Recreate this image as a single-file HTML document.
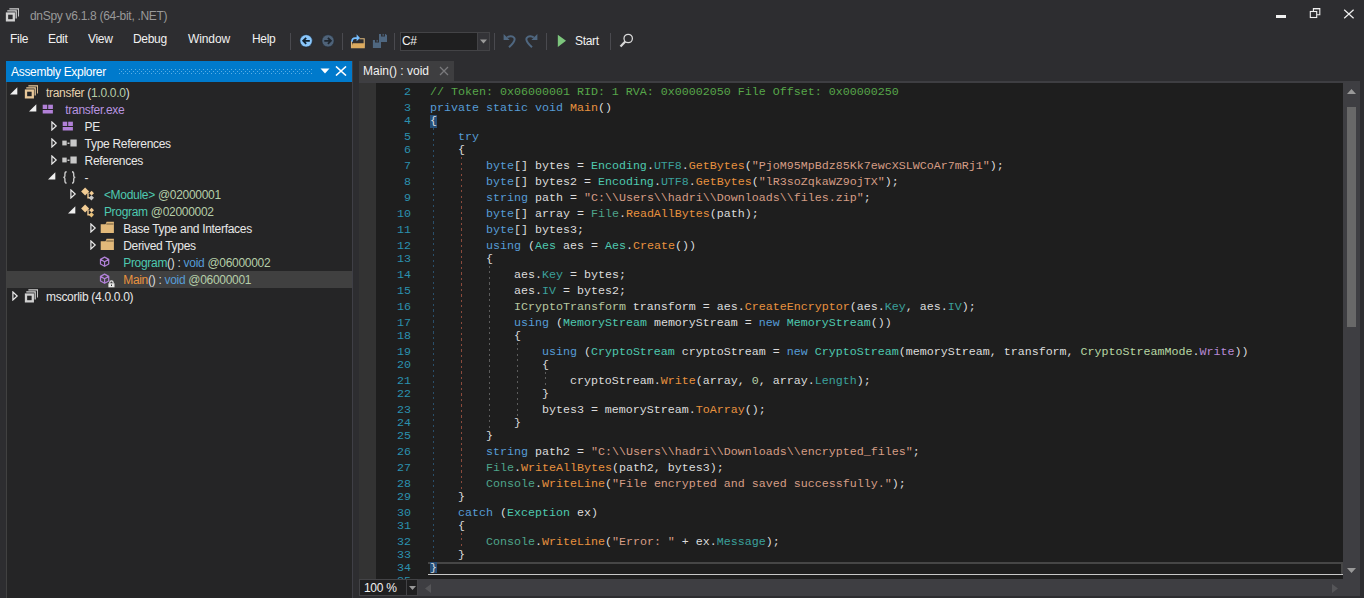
<!DOCTYPE html>
<html><head><meta charset="utf-8"><style>
*{margin:0;padding:0;box-sizing:border-box}
html,body{width:1364px;height:598px;overflow:hidden;background:#2d2d30;font-family:"Liberation Sans",sans-serif;font-size:12px;color:#f1f1f1}
.abs{position:absolute}
.ui{position:absolute;white-space:pre;letter-spacing:-0.3px;line-height:16px}
.sep{position:absolute;top:33px;width:1px;height:17px;background:#4a4a4f}
.row{position:absolute;left:7px;width:345px;height:17px}
.row.sel{background:#404040}
.row .ab{position:absolute}
.ico{position:absolute;top:0.5px;width:16px;height:16px}
.ico svg{display:block}
.tt{position:absolute;top:1px;white-space:pre;letter-spacing:-0.3px;line-height:17px;font-size:12px}
.ln{position:absolute;right:0;width:60px;text-align:right;font-family:"Liberation Mono",monospace;font-size:11.67px;letter-spacing:0px;color:#2b91af;line-height:16px;white-space:pre}
.cl{position:absolute;left:430px;font-family:"Liberation Mono",monospace;font-size:11.67px;letter-spacing:0px;line-height:16px;white-space:pre;color:#dcdcdc}
.gd{position:absolute;width:1px}
.selbg{position:absolute;left:430px;width:7px;background:#264f78}
.selb{color:#dcdcdc}
</style></head><body>
<!-- title bar -->
<div class="abs" style="left:3px;top:7.5px;width:16px;height:16px"><svg width="16" height="16" viewBox="0 0 16 16"><rect x="4" y="5.55" width="6.8" height="6.8" fill="none" stroke="#d0d0d0" stroke-width="2.3"/><path d="M4.9 3.5 V2.85 H13.2 V10.4" fill="none" stroke="#d0d0d0" stroke-width="1.25"/><path d="M7 1.4 V0.8 H15.7 V8.4" fill="none" stroke="#d0d0d0" stroke-width="1.25"/></svg></div>
<div class="ui" style="left:30px;top:8px;color:#999999">dnSpy v6.1.8 (64-bit, .NET)</div>
<div class="abs" style="left:1276px;top:15px;width:10px;height:3px;background:#f0f0f0"></div>
<svg class="abs" style="left:1309px;top:7px" width="13" height="13" viewBox="0 0 13 13"><rect x="1.3" y="4.5" width="6.4" height="6" fill="none" stroke="#f0f0f0" stroke-width="1.1"/><path d="M4.4 4.3 V1.5 H10.8 V7.8 H7.9" fill="none" stroke="#f0f0f0" stroke-width="1.1"/><path d="M4.4 1.9 H10.8" stroke="#f0f0f0" stroke-width="1"/></svg>
<svg class="abs" style="left:1343px;top:9px" width="12" height="10" viewBox="0 0 12 10"><path d="M1.2 0.8 L10.6 9.2 M10.6 0.8 L1.2 9.2" stroke="#f0f0f0" stroke-width="1.2"/></svg>
<!-- menu -->
<div class="ui" style="left:10px;top:31px">File</div>
<div class="ui" style="left:48px;top:31px">Edit</div>
<div class="ui" style="left:88px;top:31px">View</div>
<div class="ui" style="left:133px;top:31px">Debug</div>
<div class="ui" style="left:188px;top:31px;letter-spacing:-0.1px">Window</div>
<div class="ui" style="left:252px;top:31px">Help</div>
<!-- toolbar -->
<div class="sep" style="left:290px"></div>
<svg class="abs" style="left:299px;top:34px" width="14" height="14" viewBox="0 0 14 14"><circle cx="7.1" cy="6.85" r="6.2" fill="#8ac6fa" stroke="#16293a" stroke-width="0.6"/><path d="M10.8 6.85 H4.3 M7.2 3.9 L4.2 6.85 L7.2 9.8" fill="none" stroke="#10202e" stroke-width="1.8"/></svg>
<svg class="abs" style="left:321px;top:34px" width="14" height="14" viewBox="0 0 14 14"><circle cx="7" cy="6.85" r="6.1" fill="#4f6379" stroke="#222a33" stroke-width="0.6"/><path d="M3.3 6.85 H9.8 M6.9 3.9 L9.9 6.85 L6.9 9.8" fill="none" stroke="#1f262e" stroke-width="1.8"/></svg>
<div class="sep" style="left:342px"></div>
<svg class="abs" style="left:350px;top:33px" width="16" height="16" viewBox="0 0 16 16"><path d="M1.5 8 V14.7 H14.2 V5.8 H9.5" fill="none" stroke="#dcb67a" stroke-width="1.1"/><path d="M2.6 10.2 H14.8 L14.1 14.9 H1.3 Z" fill="#dcaa5e"/><path d="M2.2 8.8 C1.6 6.6 3 5.2 5.2 5.2 H7.6" fill="none" stroke="#75beff" stroke-width="1.7"/><path d="M6.6 1.3 L10 4.9 L6.6 8.3 Z" fill="#75beff"/></svg>
<svg class="abs" style="left:372px;top:33px" width="16" height="16" viewBox="0 0 16 16"><path d="M7 0.9 H13.6 L15 2.3 V9 H7 Z" fill="#4f6780"/><rect x="9" y="0.9" width="4" height="2.6" fill="#2d2d30"/><rect x="10.6" y="0.9" width="1.1" height="1.8" fill="#4f6780"/><path d="M0.9 6.9 H7.5 L9 8.3 V15 H0.9 Z" fill="#4f6780"/><rect x="3" y="6.9" width="4" height="2.6" fill="#2d2d30"/><rect x="4.6" y="6.9" width="1.1" height="1.8" fill="#4f6780"/></svg>
<div class="sep" style="left:394px"></div>
<div class="abs" style="left:400px;top:32px;width:90px;height:19px;border:1px solid #434346;background:#1f1f20"></div>
<div class="abs" style="left:477px;top:33px;width:12px;height:17px;background:#333337;border-left:1px solid #434346"></div>
<svg class="abs" style="left:480px;top:39px" width="7" height="5" viewBox="0 0 7 5"><path d="M0 0.5 H7 L3.5 4.5 Z" fill="#999"/></svg>
<div class="ui" style="left:402px;top:33px">C#</div>
<div class="sep" style="left:494px"></div>
<svg class="abs" style="left:502px;top:33px" width="15" height="16" viewBox="0 0 15 16"><path d="M5.2 4.6 C7 3 10.5 2.6 12.2 4.8 C13.6 6.8 12.8 9 7 14.3" fill="none" stroke="#4f6780" stroke-width="2"/><path d="M1.6 1 V6.9 H7.6 Z" fill="#4f6780"/></svg>
<svg class="abs" style="left:524px;top:33px" width="15" height="16" viewBox="0 0 15 16"><path d="M9.8 4.6 C8 3 4.5 2.6 2.8 4.8 C1.4 6.8 2.2 9 8 14.3" fill="none" stroke="#4f6780" stroke-width="2"/><path d="M13.4 1 V6.9 H7.4 Z" fill="#4f6780"/></svg>
<div class="sep" style="left:546px"></div>
<svg class="abs" style="left:557px;top:34px" width="10" height="14" viewBox="0 0 10 14"><path d="M0.8 0.8 L9 6.8 L0.8 13 Z" fill="#7dc67d"/></svg>
<div class="ui" style="left:575px;top:33px">Start</div>
<div class="sep" style="left:610px"></div>
<svg class="abs" style="left:619px;top:33px" width="15" height="15" viewBox="0 0 15 15"><circle cx="9.2" cy="5.5" r="4.2" fill="none" stroke="#d8d8d8" stroke-width="1.3"/><path d="M6.3 8.5 L1.5 13.5" stroke="#d8d8d8" stroke-width="2.2"/></svg>

<!-- assembly explorer -->
<div class="abs" style="left:6px;top:61px;width:347px;height:537px;background:#252526;border-left:1px solid #414141;border-right:1px solid #3f3f46"></div>
<div class="abs" style="left:6px;top:61px;width:346px;height:21px;background:#007acc"></div>
<div class="ui" style="left:11px;top:64px;color:#ffffff">Assembly Explorer</div>
<svg class="abs" style="left:119px;top:69px" width="194" height="5"><defs><pattern id="dp" width="4" height="4" patternUnits="userSpaceOnUse"><rect x="0" y="0" width="1" height="1" fill="#5aaee6"/><rect x="2" y="2" width="1" height="1" fill="#5aaee6"/></pattern></defs><rect width="194" height="5" fill="url(#dp)"/></svg>
<svg class="abs" style="left:320px;top:68px" width="10" height="6" viewBox="0 0 10 6"><path d="M0.5 0.5 H9.5 L5 5.5 Z" fill="#ffffff"/></svg>
<svg class="abs" style="left:335px;top:66px" width="12" height="10" viewBox="0 0 12 10"><path d="M1 0.5 L11 9.5 M11 0.5 L1 9.5" stroke="#ffffff" stroke-width="1.6"/></svg>
<div class="row" style="top:84px"><svg class="ab" style="left:2.7px;top:2.5px" width="8" height="8" viewBox="0 0 8 8"><path d="M0 7.5 L7.3 7.5 L7.3 0.2 Z" fill="#f0f0f0"/></svg><div class="ico" style="left:15.0px"><svg width="16" height="16" viewBox="0 0 16 16"><rect x="4" y="5.55" width="6.8" height="6.8" fill="none" stroke="#e8c89a" stroke-width="2.3"/><path d="M4.9 3.5 V2.85 H13.2 V10.4" fill="none" stroke="#e8c89a" stroke-width="1.25"/><path d="M7 1.4 V0.8 H15.7 V8.4" fill="none" stroke="#e8c89a" stroke-width="1.25"/></svg></div><div class="tt" style="left:39.0px"><span style="color:#e6d2ae">transfer</span><span style="color:#dcdcdc"> (</span><span style="color:#b5cea8">1.0.0.0</span><span style="color:#dcdcdc">)</span></div></div><div class="row" style="top:101px"><svg class="ab" style="left:22.0px;top:2.5px" width="8" height="8" viewBox="0 0 8 8"><path d="M0 7.5 L7.3 7.5 L7.3 0.2 Z" fill="#f0f0f0"/></svg><div class="ico" style="left:34.3px"><svg width="16" height="16" viewBox="0 0 16 16"><rect x="1.7" y="2.7" width="4.5" height="4.3" fill="#b180d7"/><rect x="7.2" y="2.7" width="4.7" height="4.3" fill="#b180d7"/><rect x="1.7" y="8" width="10.2" height="3.5" fill="#b180d7"/></svg></div><div class="tt" style="left:58.3px"><span style="color:#b894e0">transfer.exe</span></div></div><div class="row" style="top:118px"><svg class="ab" style="left:44.0px;top:3px" width="7" height="10" viewBox="0 0 7 10"><path d="M0.9 1 L5.2 5 L0.9 9 Z" fill="none" stroke="#e8e8e8" stroke-width="1.2"/></svg><div class="ico" style="left:53.6px"><svg width="16" height="16" viewBox="0 0 16 16"><rect x="1.7" y="2.7" width="4.5" height="4.3" fill="#b180d7"/><rect x="7.2" y="2.7" width="4.7" height="4.3" fill="#b180d7"/><rect x="1.7" y="8" width="10.2" height="3.5" fill="#b180d7"/></svg></div><div class="tt" style="left:77.6px"><span style="color:#e8e8e8">PE</span></div></div><div class="row" style="top:135px"><svg class="ab" style="left:44.0px;top:3px" width="7" height="10" viewBox="0 0 7 10"><path d="M0.9 1 L5.2 5 L0.9 9 Z" fill="none" stroke="#e8e8e8" stroke-width="1.2"/></svg><div class="ico" style="left:53.6px"><svg width="16" height="16" viewBox="0 0 16 16"><rect x="1.3" y="4.6" width="4.4" height="4.8" fill="#c8c8c8"/><rect x="6.5" y="6.5" width="2" height="1.5" fill="#c8c8c8"/><rect x="9.4" y="3.5" width="6.3" height="7" fill="#c8c8c8"/></svg></div><div class="tt" style="left:77.6px"><span style="color:#e8e8e8">Type References</span></div></div><div class="row" style="top:152px"><svg class="ab" style="left:44.0px;top:3px" width="7" height="10" viewBox="0 0 7 10"><path d="M0.9 1 L5.2 5 L0.9 9 Z" fill="none" stroke="#e8e8e8" stroke-width="1.2"/></svg><div class="ico" style="left:53.6px"><svg width="16" height="16" viewBox="0 0 16 16"><rect x="1.3" y="4.6" width="4.4" height="4.8" fill="#c8c8c8"/><rect x="6.5" y="6.5" width="2" height="1.5" fill="#c8c8c8"/><rect x="9.4" y="3.5" width="6.3" height="7" fill="#c8c8c8"/></svg></div><div class="tt" style="left:77.6px"><span style="color:#e8e8e8">References</span></div></div><div class="row" style="top:169px"><svg class="ab" style="left:41.3px;top:2.5px" width="8" height="8" viewBox="0 0 8 8"><path d="M0 7.5 L7.3 7.5 L7.3 0.2 Z" fill="#f0f0f0"/></svg><div class="ico" style="left:53.6px"><svg width="16" height="16" viewBox="0 0 16 16"><path d="M5.6 1.7 C4 1.7 3.9 2.6 3.9 4.2 V5.9 C3.9 6.9 3.3 7.35 2.3 7.35 C3.3 7.35 3.9 7.8 3.9 8.8 V10.7 C3.9 12.3 4 13.1 5.6 13.1 M11 1.7 C12.6 1.7 12.7 2.6 12.7 4.2 V5.9 C12.7 6.9 13.3 7.35 14.3 7.35 C13.3 7.35 12.7 7.8 12.7 8.8 V10.7 C12.7 12.3 12.6 13.1 11 13.1" fill="none" stroke="#c8c8c8" stroke-width="1.4"/></svg></div><div class="tt" style="left:77.6px"><span style="color:#e8e8e8">-</span></div></div><div class="row" style="top:186px"><svg class="ab" style="left:63.3px;top:3px" width="7" height="10" viewBox="0 0 7 10"><path d="M0.9 1 L5.2 5 L0.9 9 Z" fill="none" stroke="#e8e8e8" stroke-width="1.2"/></svg><div class="ico" style="left:72.9px"><svg width="16" height="16" viewBox="0 0 16 16"><path d="M5.1 0.4 L9.1 4.4 L5.1 8.4 L1.1 4.4Z" fill="#f2cc94"/><path d="M8 5.5 V10.8 H10" fill="none" stroke="#f2cc94" stroke-width="1.4"/><path d="M11.6 3.8 L14 6.2 L11.6 8.6 L9.2 6.2Z" fill="#f2cc94"/><path d="M11.4 8.2 L14 10.8 L11.4 13.4 L8.8 10.8Z" fill="#c8c8c8"/></svg></div><div class="tt" style="left:96.9px"><span style="color:#4ec9b0">&lt;Module&gt;</span><span style="color:#b5cea8"> @02000001</span></div></div><div class="row" style="top:203px"><svg class="ab" style="left:60.6px;top:2.5px" width="8" height="8" viewBox="0 0 8 8"><path d="M0 7.5 L7.3 7.5 L7.3 0.2 Z" fill="#f0f0f0"/></svg><div class="ico" style="left:72.9px"><svg width="16" height="16" viewBox="0 0 16 16"><path d="M5.1 0.4 L9.1 4.4 L5.1 8.4 L1.1 4.4Z" fill="#f2cc94"/><path d="M8 5.5 V10.8 H10" fill="none" stroke="#f2cc94" stroke-width="1.4"/><path d="M11.6 3.8 L14 6.2 L11.6 8.6 L9.2 6.2Z" fill="#f2cc94"/><path d="M11.4 8.2 L14 10.8 L11.4 13.4 L8.8 10.8Z" fill="#e8c17b"/></svg></div><div class="tt" style="left:96.9px"><span style="color:#4ec9b0">Program</span><span style="color:#b5cea8"> @02000002</span></div></div><div class="row" style="top:220px"><svg class="ab" style="left:82.6px;top:3px" width="7" height="10" viewBox="0 0 7 10"><path d="M0.9 1 L5.2 5 L0.9 9 Z" fill="none" stroke="#e8e8e8" stroke-width="1.2"/></svg><div class="ico" style="left:92.2px"><svg width="16" height="16" viewBox="0 0 16 16"><path d="M1.7 3.2 H6.5 L7.6 0.8 H14.9 V11.9 H1.7 Z" fill="#e2b97a"/><path d="M7.3 3 H14.5" stroke="#3a3024" stroke-width="0.7"/></svg></div><div class="tt" style="left:116.2px"><span style="color:#e8e8e8">Base Type and Interfaces</span></div></div><div class="row" style="top:237px"><svg class="ab" style="left:82.6px;top:3px" width="7" height="10" viewBox="0 0 7 10"><path d="M0.9 1 L5.2 5 L0.9 9 Z" fill="none" stroke="#e8e8e8" stroke-width="1.2"/></svg><div class="ico" style="left:92.2px"><svg width="16" height="16" viewBox="0 0 16 16"><path d="M1.7 3.2 H6.5 L7.6 0.8 H14.9 V11.9 H1.7 Z" fill="#e2b97a"/><path d="M7.3 3 H14.5" stroke="#3a3024" stroke-width="0.7"/></svg></div><div class="tt" style="left:116.2px"><span style="color:#e8e8e8">Derived Types</span></div></div><div class="row" style="top:254px"><div class="ico" style="left:92.2px"><svg width="16" height="16" viewBox="0 0 16 16"><path d="M5.6 2.1 L9.7 4.4 V9 L5.6 11.3 L1.5 9 V4.4 Z M1.5 4.4 L5.6 6.7 L9.7 4.4 M5.6 6.7 V11.3" fill="none" stroke="#b180d7" stroke-width="1.25" stroke-linejoin="round"/></svg></div><div class="tt" style="left:116.2px"><span style="color:#4ec9b0">Program</span><span style="color:#dcdcdc">() : </span><span style="color:#569cd6">void</span><span style="color:#b5cea8"> @06000002</span></div></div><div class="row sel" style="top:271px"><div class="ico" style="left:92.2px"><svg width="16" height="16" viewBox="0 0 16 16"><path d="M5.6 2.1 L9.7 4.4 V9 L5.6 11.3 L1.5 9 V4.4 Z M1.5 4.4 L5.6 6.7 L9.7 4.4 M5.6 6.7 V11.3" fill="none" stroke="#b180d7" stroke-width="1.25" stroke-linejoin="round"/><rect x="9.4" y="11.3" width="6.1" height="4" fill="#e8e8e8"/><path d="M10.8 11.5 V10.6 A1.65 1.65 0 0 1 14.1 10.6 V11.5" fill="none" stroke="#e8e8e8" stroke-width="1.2"/><rect x="12" y="12.6" width="1" height="1.4" fill="#2a2a2a"/></svg></div><div class="tt" style="left:116.2px"><span style="color:#e8923f">Main</span><span style="color:#dcdcdc">() : </span><span style="color:#569cd6">void</span><span style="color:#b5cea8"> @06000001</span></div></div><div class="row" style="top:288px"><svg class="ab" style="left:5.4px;top:3px" width="7" height="10" viewBox="0 0 7 10"><path d="M0.9 1 L5.2 5 L0.9 9 Z" fill="none" stroke="#e8e8e8" stroke-width="1.2"/></svg><div class="ico" style="left:15.0px"><svg width="16" height="16" viewBox="0 0 16 16"><rect x="4" y="5.55" width="6.8" height="6.8" fill="none" stroke="#d0d0d0" stroke-width="2.3"/><path d="M4.9 3.5 V2.85 H13.2 V10.4" fill="none" stroke="#d0d0d0" stroke-width="1.25"/><path d="M7 1.4 V0.8 H15.7 V8.4" fill="none" stroke="#d0d0d0" stroke-width="1.25"/></svg></div><div class="tt" style="left:39.0px"><span style="color:#e8e8e8">mscorlib (4.0.0.0)</span></div></div>

<!-- document tab -->
<div class="abs" style="left:359px;top:61px;width:95px;height:20px;background:#3e3e40"></div>
<div class="ui" style="left:363px;top:63px;color:#f1f1f1;letter-spacing:0">Main() : void</div>
<svg class="abs" style="left:439px;top:66px" width="10" height="10" viewBox="0 0 10 10"><path d="M1 1 L9 9 M9 1 L1 9" stroke="#7a7a7c" stroke-width="1.3"/></svg>
<div class="abs" style="left:359px;top:81px;width:1001px;height:2px;background:#3e3e42"></div>

<!-- editor -->
<div class="abs" style="left:359px;top:83px;width:984px;height:496px;background:#1e1e1e;overflow:hidden">
  <div class="abs" style="left:0;top:0;width:17px;height:496px;background:#333333"></div>
</div>
<div class="abs" style="left:359px;top:83px;width:984px;height:496px;overflow:hidden">
  <div style="position:absolute;left:-359px;top:-83px;width:1364px;height:598px">
    <div class="abs" style="left:428px;top:562px;width:915px;height:13px;border-top:2px solid #464646;border-right:2px solid #464646;border-bottom:1px solid #3a3a3a"></div>
    <div class="abs" style="left:428px;top:574px;width:915px;height:1px;background:#c8c8c8"></div>
    <div class="selbg" style="top:115px;height:13px"></div><div class="selbg" style="top:562px;height:11px"></div>
    <div class="gd" style="left:433px;top:128px;height:434px;background:repeating-linear-gradient(to bottom,#2a4f6a 0 2px,transparent 2px 5.5px)"></div><div class="gd" style="left:461px;top:157px;height:334px;background:repeating-linear-gradient(to bottom,#8a4a3c 0 2px,transparent 2px 5.5px)"></div><div class="gd" style="left:461px;top:533px;height:16px;background:repeating-linear-gradient(to bottom,#8a4a3c 0 2px,transparent 2px 5.5px)"></div><div class="gd" style="left:489px;top:266px;height:164px;background:repeating-linear-gradient(to bottom,#5c5c5c 0 2px,transparent 2px 5.5px)"></div><div class="gd" style="left:517px;top:343px;height:74px;background:repeating-linear-gradient(to bottom,#5c5c5c 0 2px,transparent 2px 5.5px)"></div><div class="gd" style="left:545px;top:372px;height:16px;background:repeating-linear-gradient(to bottom,#5c5c5c 0 2px,transparent 2px 5.5px)"></div>
    <div class="abs" style="left:351px;top:0;width:60px;height:598px"><div class="ln" style="top:84px">2</div><div class="ln" style="top:100px">3</div><div class="ln" style="top:113px">4</div><div class="ln" style="top:129px">5</div><div class="ln" style="top:142px">6</div><div class="ln" style="top:158px">7</div><div class="ln" style="top:174px">8</div><div class="ln" style="top:190px">9</div><div class="ln" style="top:206px">10</div><div class="ln" style="top:222px">11</div><div class="ln" style="top:238px">12</div><div class="ln" style="top:251px">13</div><div class="ln" style="top:267px">14</div><div class="ln" style="top:283px">15</div><div class="ln" style="top:299px">16</div><div class="ln" style="top:315px">17</div><div class="ln" style="top:328px">18</div><div class="ln" style="top:344px">19</div><div class="ln" style="top:357px">20</div><div class="ln" style="top:373px">21</div><div class="ln" style="top:386px">22</div><div class="ln" style="top:402px">23</div><div class="ln" style="top:415px">24</div><div class="ln" style="top:428px">25</div><div class="ln" style="top:444px">26</div><div class="ln" style="top:460px">27</div><div class="ln" style="top:476px">28</div><div class="ln" style="top:489px">29</div><div class="ln" style="top:505px">30</div><div class="ln" style="top:518px">31</div><div class="ln" style="top:534px">32</div><div class="ln" style="top:547px">33</div><div class="ln" style="top:560px">34</div><div class="ln" style="top:573px">35</div></div>
    <div class="cl" style="top:84px"><span style="color:#57a64a">// Token: 0x06000001 RID: 1 RVA: 0x00002050 File Offset: 0x00000250</span></div><div class="cl" style="top:100px"><span style="color:#569cd6">private</span><span style="color:#dcdcdc"> </span><span style="color:#569cd6">static</span><span style="color:#dcdcdc"> </span><span style="color:#569cd6">void</span><span style="color:#dcdcdc"> </span><span style="color:#e8923f">Main</span><span style="color:#dcdcdc">()</span></div><div class="cl" style="top:113px"><span class="selb">{</span></div><div class="cl" style="top:129px"><span style="color:#dcdcdc">    </span><span style="color:#569cd6">try</span></div><div class="cl" style="top:142px"><span style="color:#dcdcdc">    {</span></div><div class="cl" style="top:158px"><span style="color:#dcdcdc">        </span><span style="color:#569cd6">byte</span><span style="color:#dcdcdc">[] bytes = </span><span style="color:#4ec9b0">Encoding</span><span style="color:#dcdcdc">.</span><span style="color:#3ba19c">UTF8</span><span style="color:#dcdcdc">.</span><span style="color:#e8923f">GetBytes</span><span style="color:#dcdcdc">(</span><span style="color:#d69d85">&quot;PjoM95MpBdz85Kk7ewcXSLWCoAr7mRj1&quot;</span><span style="color:#dcdcdc">);</span></div><div class="cl" style="top:174px"><span style="color:#dcdcdc">        </span><span style="color:#569cd6">byte</span><span style="color:#dcdcdc">[] bytes2 = </span><span style="color:#4ec9b0">Encoding</span><span style="color:#dcdcdc">.</span><span style="color:#3ba19c">UTF8</span><span style="color:#dcdcdc">.</span><span style="color:#e8923f">GetBytes</span><span style="color:#dcdcdc">(</span><span style="color:#d69d85">&quot;lR3soZqkaWZ9ojTX&quot;</span><span style="color:#dcdcdc">);</span></div><div class="cl" style="top:190px"><span style="color:#dcdcdc">        </span><span style="color:#569cd6">string</span><span style="color:#dcdcdc"> path = </span><span style="color:#d69d85">&quot;C:\\Users\\hadri\\Downloads\\files.zip&quot;</span><span style="color:#dcdcdc">;</span></div><div class="cl" style="top:206px"><span style="color:#dcdcdc">        </span><span style="color:#569cd6">byte</span><span style="color:#dcdcdc">[] array = </span><span style="color:#4ea58b">File</span><span style="color:#dcdcdc">.</span><span style="color:#e8923f">ReadAllBytes</span><span style="color:#dcdcdc">(path);</span></div><div class="cl" style="top:222px"><span style="color:#dcdcdc">        </span><span style="color:#569cd6">byte</span><span style="color:#dcdcdc">[] bytes3;</span></div><div class="cl" style="top:238px"><span style="color:#dcdcdc">        </span><span style="color:#569cd6">using</span><span style="color:#dcdcdc"> (</span><span style="color:#4ec9b0">Aes</span><span style="color:#dcdcdc"> aes = </span><span style="color:#4ec9b0">Aes</span><span style="color:#dcdcdc">.</span><span style="color:#e8923f">Create</span><span style="color:#dcdcdc">())</span></div><div class="cl" style="top:251px"><span style="color:#dcdcdc">        {</span></div><div class="cl" style="top:267px"><span style="color:#dcdcdc">            aes.</span><span style="color:#3ba19c">Key</span><span style="color:#dcdcdc"> = bytes;</span></div><div class="cl" style="top:283px"><span style="color:#dcdcdc">            aes.</span><span style="color:#3ba19c">IV</span><span style="color:#dcdcdc"> = bytes2;</span></div><div class="cl" style="top:299px"><span style="color:#dcdcdc">            </span><span style="color:#b8c8a0">ICryptoTransform</span><span style="color:#dcdcdc"> transform = aes.</span><span style="color:#e8923f">CreateEncryptor</span><span style="color:#dcdcdc">(aes.</span><span style="color:#3ba19c">Key</span><span style="color:#dcdcdc">, aes.</span><span style="color:#3ba19c">IV</span><span style="color:#dcdcdc">);</span></div><div class="cl" style="top:315px"><span style="color:#dcdcdc">            </span><span style="color:#569cd6">using</span><span style="color:#dcdcdc"> (</span><span style="color:#4ec9b0">MemoryStream</span><span style="color:#dcdcdc"> memoryStream = </span><span style="color:#569cd6">new</span><span style="color:#dcdcdc"> </span><span style="color:#4ec9b0">MemoryStream</span><span style="color:#dcdcdc">())</span></div><div class="cl" style="top:328px"><span style="color:#dcdcdc">            {</span></div><div class="cl" style="top:344px"><span style="color:#dcdcdc">                </span><span style="color:#569cd6">using</span><span style="color:#dcdcdc"> (</span><span style="color:#4ec9b0">CryptoStream</span><span style="color:#dcdcdc"> cryptoStream = </span><span style="color:#569cd6">new</span><span style="color:#dcdcdc"> </span><span style="color:#4ec9b0">CryptoStream</span><span style="color:#dcdcdc">(memoryStream, transform, </span><span style="color:#b8d7a3">CryptoStreamMode</span><span style="color:#dcdcdc">.</span><span style="color:#b98ad6">Write</span><span style="color:#dcdcdc">))</span></div><div class="cl" style="top:357px"><span style="color:#dcdcdc">                {</span></div><div class="cl" style="top:373px"><span style="color:#dcdcdc">                    cryptoStream.</span><span style="color:#e8923f">Write</span><span style="color:#dcdcdc">(array, </span><span style="color:#b5cea8">0</span><span style="color:#dcdcdc">, array.</span><span style="color:#3ba19c">Length</span><span style="color:#dcdcdc">);</span></div><div class="cl" style="top:386px"><span style="color:#dcdcdc">                }</span></div><div class="cl" style="top:402px"><span style="color:#dcdcdc">                bytes3 = memoryStream.</span><span style="color:#e8923f">ToArray</span><span style="color:#dcdcdc">();</span></div><div class="cl" style="top:415px"><span style="color:#dcdcdc">            }</span></div><div class="cl" style="top:428px"><span style="color:#dcdcdc">        }</span></div><div class="cl" style="top:444px"><span style="color:#dcdcdc">        </span><span style="color:#569cd6">string</span><span style="color:#dcdcdc"> path2 = </span><span style="color:#d69d85">&quot;C:\\Users\\hadri\\Downloads\\encrypted_files&quot;</span><span style="color:#dcdcdc">;</span></div><div class="cl" style="top:460px"><span style="color:#dcdcdc">        </span><span style="color:#4ea58b">File</span><span style="color:#dcdcdc">.</span><span style="color:#e8923f">WriteAllBytes</span><span style="color:#dcdcdc">(path2, bytes3);</span></div><div class="cl" style="top:476px"><span style="color:#dcdcdc">        </span><span style="color:#4ea58b">Console</span><span style="color:#dcdcdc">.</span><span style="color:#e8923f">WriteLine</span><span style="color:#dcdcdc">(</span><span style="color:#d69d85">&quot;File encrypted and saved successfully.&quot;</span><span style="color:#dcdcdc">);</span></div><div class="cl" style="top:489px"><span style="color:#dcdcdc">    }</span></div><div class="cl" style="top:505px"><span style="color:#dcdcdc">    </span><span style="color:#569cd6">catch</span><span style="color:#dcdcdc"> (</span><span style="color:#4ec9b0">Exception</span><span style="color:#dcdcdc"> ex)</span></div><div class="cl" style="top:518px"><span style="color:#dcdcdc">    {</span></div><div class="cl" style="top:534px"><span style="color:#dcdcdc">        </span><span style="color:#4ea58b">Console</span><span style="color:#dcdcdc">.</span><span style="color:#e8923f">WriteLine</span><span style="color:#dcdcdc">(</span><span style="color:#d69d85">&quot;Error: &quot;</span><span style="color:#dcdcdc"> + ex.</span><span style="color:#3ba19c">Message</span><span style="color:#dcdcdc">);</span></div><div class="cl" style="top:547px"><span style="color:#dcdcdc">    }</span></div><div class="cl" style="top:560px"><span class="selb">}</span></div>
  </div>
</div>
<!-- vertical scrollbar -->
<div class="abs" style="left:1343px;top:83px;width:17px;height:496px;background:#3e3e42"></div>
<svg class="abs" style="left:1347px;top:89px" width="9" height="5" viewBox="0 0 9 5"><path d="M0 5 H9 L4.5 0 Z" fill="#999999"/></svg>
<div class="abs" style="left:1347px;top:107px;width:9px;height:220px;background:#686868"></div>
<svg class="abs" style="left:1347px;top:568px" width="9" height="5" viewBox="0 0 9 5"><path d="M0 0 H9 L4.5 5 Z" fill="#999999"/></svg>
<!-- bottom bar -->
<div class="abs" style="left:359px;top:579px;width:1001px;height:17px;background:#3e3e42"></div>
<div class="abs" style="left:359px;top:579px;width:48px;height:17px;background:#1f1f20;border:1px solid #434346"></div>
<div class="abs" style="left:406px;top:579px;width:12px;height:17px;background:#1f1f20;border:1px solid #434346;border-left:1px solid #434346"></div>
<svg class="abs" style="left:409px;top:586px" width="7" height="4" viewBox="0 0 7 4"><path d="M0 0 H7 L3.5 4 Z" fill="#999"/></svg>
<div class="ui" style="left:364px;top:580px;line-height:16px">100 %</div>
<svg class="abs" style="left:425px;top:584px" width="6" height="9" viewBox="0 0 6 9"><path d="M6 0 V9 L0 4.5 Z" fill="#555558"/></svg>
<svg class="abs" style="left:1332px;top:584px" width="6" height="9" viewBox="0 0 6 9"><path d="M0 0 V9 L6 4.5 Z" fill="#555558"/></svg>
</body></html>
